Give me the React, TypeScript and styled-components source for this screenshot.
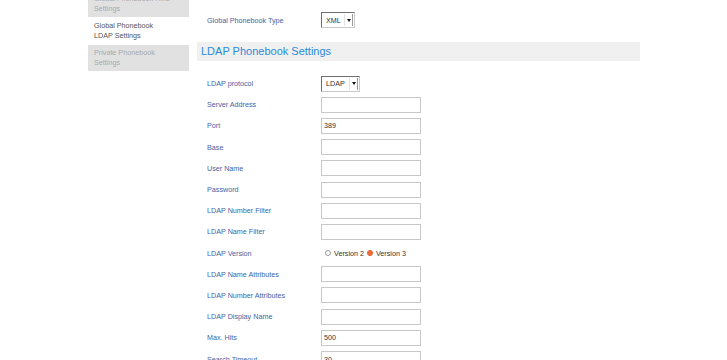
import React from "react";
import styled, { createGlobalStyle } from "styled-components";

const GlobalStyle = createGlobalStyle`
  body {
    margin: 0;
    background: #fff;
    font-family: "Liberation Sans", Arial, sans-serif;
    overflow: hidden;
  }
`;

const Page = styled.div`
  display: flex;
  align-items: flex-start;
  padding-left: 88px;
  height: 360px;
  overflow: hidden;
`;

const Sidebar = styled.nav`
  width: 101px;
  margin-top: -9px;
  display: flex;
  flex-direction: column;
  gap: 1px;
`;

const SideItem = styled.div<{ active?: boolean }>`
  height: 26px;
  box-sizing: border-box;
  padding: 3px 6px;
  font-size: 7.2px;
  line-height: 10px;
  background: ${(p) => (p.active ? "#fff" : "#e1e1e1")};
  color: ${(p) => (p.active ? "#555" : "#a9a9a9")};
`;

const Main = styled.main`
  margin-left: 8px;
  width: 443px;
  padding-top: 10px;
`;

const Row = styled.div<{ h?: number }>`
  display: flex;
  align-items: center;
  height: ${(p) => p.h ?? 21.2}px;
  padding-left: 10px;
`;

const Label = styled.div`
  width: 114px;
  font-size: 7.2px;
  color: #3f64a3;
`;

const Heading = styled.h2`
  margin: 12px 0 12px;
  height: 19px;
  line-height: 19px;
  padding-left: 4px;
  background: #f0f0f0;
  color: #2a8bd8;
  font-size: 11px;
  font-weight: normal;
`;

const Select = styled.div<{ w: number }>`
  width: ${(p) => p.w}px;
  height: 16px;
  box-sizing: border-box;
  border: 1px solid;
  border-color: #6f6f6f #c9c9c9 #c9c9c9 #6f6f6f;
  display: flex;
  align-items: center;
  padding-left: 4px;
  font-size: 7.2px;
  color: #333;
  position: relative;
  background: #fff;
`;

const Arrow = styled.span`
  position: absolute;
  right: 1px;
  top: 1px;
  bottom: 1px;
  width: 7px;
  border-left: 1px solid #e4e4e4;
  border-right: 1px solid #9a9a9a;
  display: flex;
  align-items: center;
  justify-content: center;
  &::after {
    content: "";
    border-left: 2px solid transparent;
    border-right: 2px solid transparent;
    border-top: 3px solid #111;
  }
`;

const Input = styled.div`
  width: 100px;
  height: 16px;
  box-sizing: border-box;
  border: 1px solid #c8c8c8;
  padding-left: 2px;
  display: flex;
  align-items: center;
  font-size: 7.2px;
  color: #333;
`;

const Radios = styled.div`
  display: flex;
  align-items: center;
  padding-left: 3px;
  font-size: 7.2px;
  color: #333;
  gap: 2px;
`;

const Radio = styled.span<{ checked?: boolean }>`
  width: 6px;
  height: 6px;
  border-radius: 50%;
  box-sizing: border-box;
  border: 1px solid ${(p) => (p.checked ? "#e0622f" : "#9a9a9a")};
  background: ${(p) => (p.checked ? "#ef6d3b" : "#fff")};
  margin-right: 1px;
  margin-left: 1px;
`;

const fields: { label: string; value?: string }[] = [
  { label: "Server Address" },
  { label: "Port", value: "389" },
  { label: "Base" },
  { label: "User Name" },
  { label: "Password" },
  { label: "LDAP Number Filter" },
  { label: "LDAP Name Filter" },
];

const fields2: { label: string; value?: string }[] = [
  { label: "LDAP Name Attributes" },
  { label: "LDAP Number Attributes" },
  { label: "LDAP Display Name" },
  { label: "Max. Hits", value: "500" },
  { label: "Search Timeout", value: "30" },
];

export default function App() {
  return (
    <>
      <GlobalStyle />
      <Page>
        <Sidebar>
          <SideItem>
            Global Phonebook XML
            <br />
            Settings
          </SideItem>
          <SideItem active>
            Global Phonebook
            <br />
            LDAP Settings
          </SideItem>
          <SideItem>
            Private Phonebook
            <br />
            Settings
          </SideItem>
        </Sidebar>
        <Main>
          <Row h={20}>
            <Label>Global Phonebook Type</Label>
            <Select w={34}>
              XML
              <Arrow />
            </Select>
          </Row>
          <Heading>LDAP Phonebook Settings</Heading>
          <Row>
            <Label>LDAP protocol</Label>
            <Select w={39}>
              LDAP
              <Arrow />
            </Select>
          </Row>
          {fields.map((f) => (
            <Row key={f.label}>
              <Label>{f.label}</Label>
              <Input>{f.value}</Input>
            </Row>
          ))}
          <Row>
            <Label>LDAP Version</Label>
            <Radios>
              <Radio />
              Version 2
              <Radio checked />
              Version 3
            </Radios>
          </Row>
          {fields2.map((f) => (
            <Row key={f.label}>
              <Label>{f.label}</Label>
              <Input>{f.value}</Input>
            </Row>
          ))}
        </Main>
      </Page>
    </>
  );
}
